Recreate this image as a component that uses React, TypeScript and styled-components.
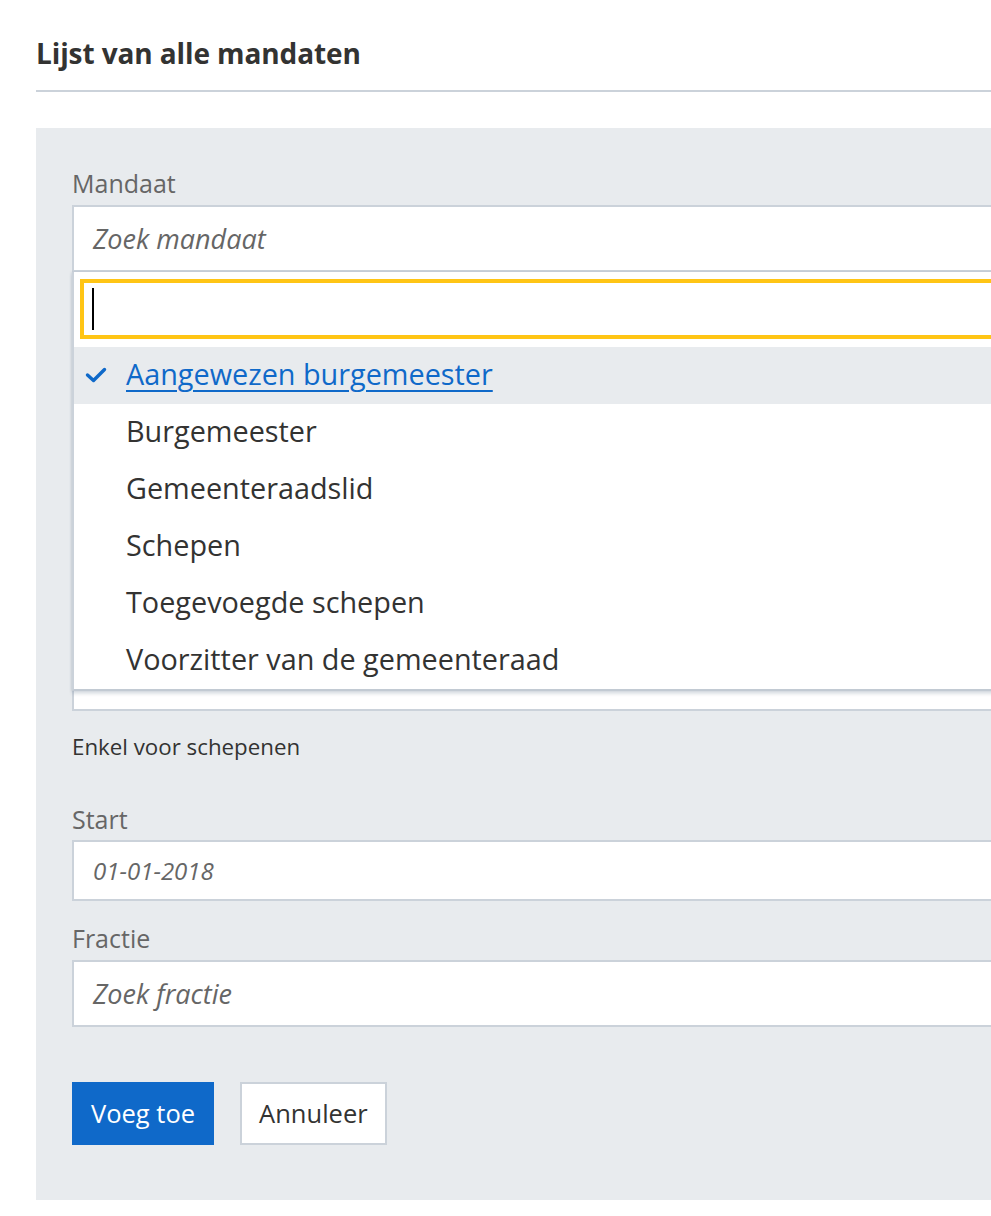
import React from "react";
import styled, { createGlobalStyle } from "styled-components";

const GlobalStyle = createGlobalStyle`
  html, body {
    margin: 0;
    padding: 0;
    overflow: hidden;
    background: #ffffff;
  }
  body {
    font-family: "Open Sans", "Noto Sans", sans-serif;
    color: #333332;
  }
`;

const Page = styled.div`
  width: 1200px;
  padding-left: 36px;
  box-sizing: border-box;
`;

const Header = styled.header`
  padding-top: 35px;
  padding-bottom: 19px;
  border-bottom: 2px solid #cbd2da;
`;

const Title = styled.h1`
  margin: 0;
  font-size: 28px;
  line-height: 36px;
  font-weight: 700;
  color: #333332;
  letter-spacing: -0.1px;
`;

const Panel = styled.section`
  margin-top: 36px;
  background: #e8ebee;
  padding: 40px 0 55px 36px;
`;

const Field = styled.div<{ $gap?: number }>`
  position: relative;
  margin-top: ${(p) => p.$gap ?? 0}px;
`;

const Label = styled.label`
  display: block;
  font-size: 25px;
  line-height: 30px;
  color: #666666;
  margin-bottom: 6.5px;
`;

const InputBox = styled.div<{ $h?: number }>`
  box-sizing: border-box;
  height: ${(p) => p.$h ?? 67}px;
  background: #ffffff;
  border: 2px solid #cbd2da;
  display: flex;
  align-items: center;
  padding-left: 19px;
`;

const Placeholder = styled.span<{ $size?: number }>`
  font-style: italic;
  font-size: ${(p) => p.$size ?? 27}px;
  color: #666666;
`;

const Dropdown = styled.div`
  position: absolute;
  left: 0;
  right: 0;
  top: 100%;
  background: #ffffff;
  border-left: 2px solid #cbd2da;
  border-bottom: 2px solid #c2cad3;
  box-shadow: 0 3px 3px rgba(120, 135, 155, 0.25), -1px 0 2px rgba(120, 135, 155, 0.2);
  padding-top: 7px;
  z-index: 10;
`;

const SearchBox = styled.div`
  box-sizing: border-box;
  margin-left: 6px;
  height: 60px;
  border: 4px solid #ffc515;
  background: #ffffff;
  display: flex;
  align-items: center;
  padding-left: 8px;
  margin-bottom: 8px;
`;

const Caret = styled.span`
  display: block;
  width: 2px;
  height: 42px;
  background: #000000;
`;

const Options = styled.ul`
  list-style: none;
  margin: 0;
  padding: 0;
`;

const Option = styled.li<{ $active?: boolean }>`
  height: 57px;
  display: flex;
  align-items: center;
  padding-left: 52px;
  padding-bottom: 4px;
  box-sizing: border-box;
  position: relative;
  font-size: 28.8px;
  color: ${(p) => (p.$active ? "#0f69c9" : "#333332")};
  background: ${(p) => (p.$active ? "#e8ebee" : "transparent")};
  text-decoration: ${(p) => (p.$active ? "underline" : "none")};
  text-decoration-thickness: 2px;
  text-underline-offset: 5px;
`;

const CheckMark = styled.svg`
  position: absolute;
  left: 11px;
  top: 50%;
  transform: translateY(-50%);
  width: 22px;
  height: 16px;
`;

const Hint = styled.p`
  margin: 21.5px 0 0;
  font-size: 22.3px;
  line-height: 28px;
  color: #333332;
`;

const Actions = styled.div`
  display: flex;
  gap: 26px;
  margin-top: 55px;
`;

const Button = styled.button<{ $primary?: boolean }>`
  box-sizing: border-box;
  height: 63px;
  font-family: inherit;
  font-size: 25.5px;
  padding: 0 17px;
  border: 2px solid ${(p) => (p.$primary ? "#0f69c9" : "#cbd2da")};
  background: ${(p) => (p.$primary ? "#0f69c9" : "#ffffff")};
  color: ${(p) => (p.$primary ? "#ffffff" : "#333332")};
  cursor: pointer;
`;

const options = [
  "Aangewezen burgemeester",
  "Burgemeester",
  "Gemeenteraadslid",
  "Schepen",
  "Toegevoegde schepen",
  "Voorzitter van de gemeenteraad",
];

export default function App() {
  return (
    <>
      <GlobalStyle />
      <Page>
        <Header>
          <Title>Lijst van alle mandaten</Title>
        </Header>
        <Panel>
          <Field>
            <Label>Mandaat</Label>
            <InputBox>
              <Placeholder>Zoek mandaat</Placeholder>
            </InputBox>
            <Dropdown>
              <SearchBox>
                <Caret />
              </SearchBox>
              <Options>
                {options.map((o, i) => (
                  <Option key={o} $active={i === 0}>
                    {i === 0 && (
                      <CheckMark viewBox="0 0 22 16">
                        <path
                          d="M2.5 8 L8.5 13.5 L19.5 2.5"
                          fill="none"
                          stroke="#0f69c9"
                          strokeWidth="3.4"
                          strokeLinecap="round"
                          strokeLinejoin="round"
                        />
                      </CheckMark>
                    )}
                    {o}
                  </Option>
                ))}
              </Options>
            </Dropdown>
          </Field>
          <Field $gap={56.5}>
            <InputBox $h={383} />
          </Field>
          <Hint>Enkel voor schepenen</Hint>
          <Field $gap={43}>
            <Label>Start</Label>
            <InputBox $h={61}>
              <Placeholder $size={24}>01-01-2018</Placeholder>
            </InputBox>
          </Field>
          <Field $gap={22}>
            <Label>Fractie</Label>
            <InputBox>
              <Placeholder>Zoek fractie</Placeholder>
            </InputBox>
          </Field>
          <Actions>
            <Button $primary>Voeg toe</Button>
            <Button>Annuleer</Button>
          </Actions>
        </Panel>
      </Page>
    </>
  );
}
